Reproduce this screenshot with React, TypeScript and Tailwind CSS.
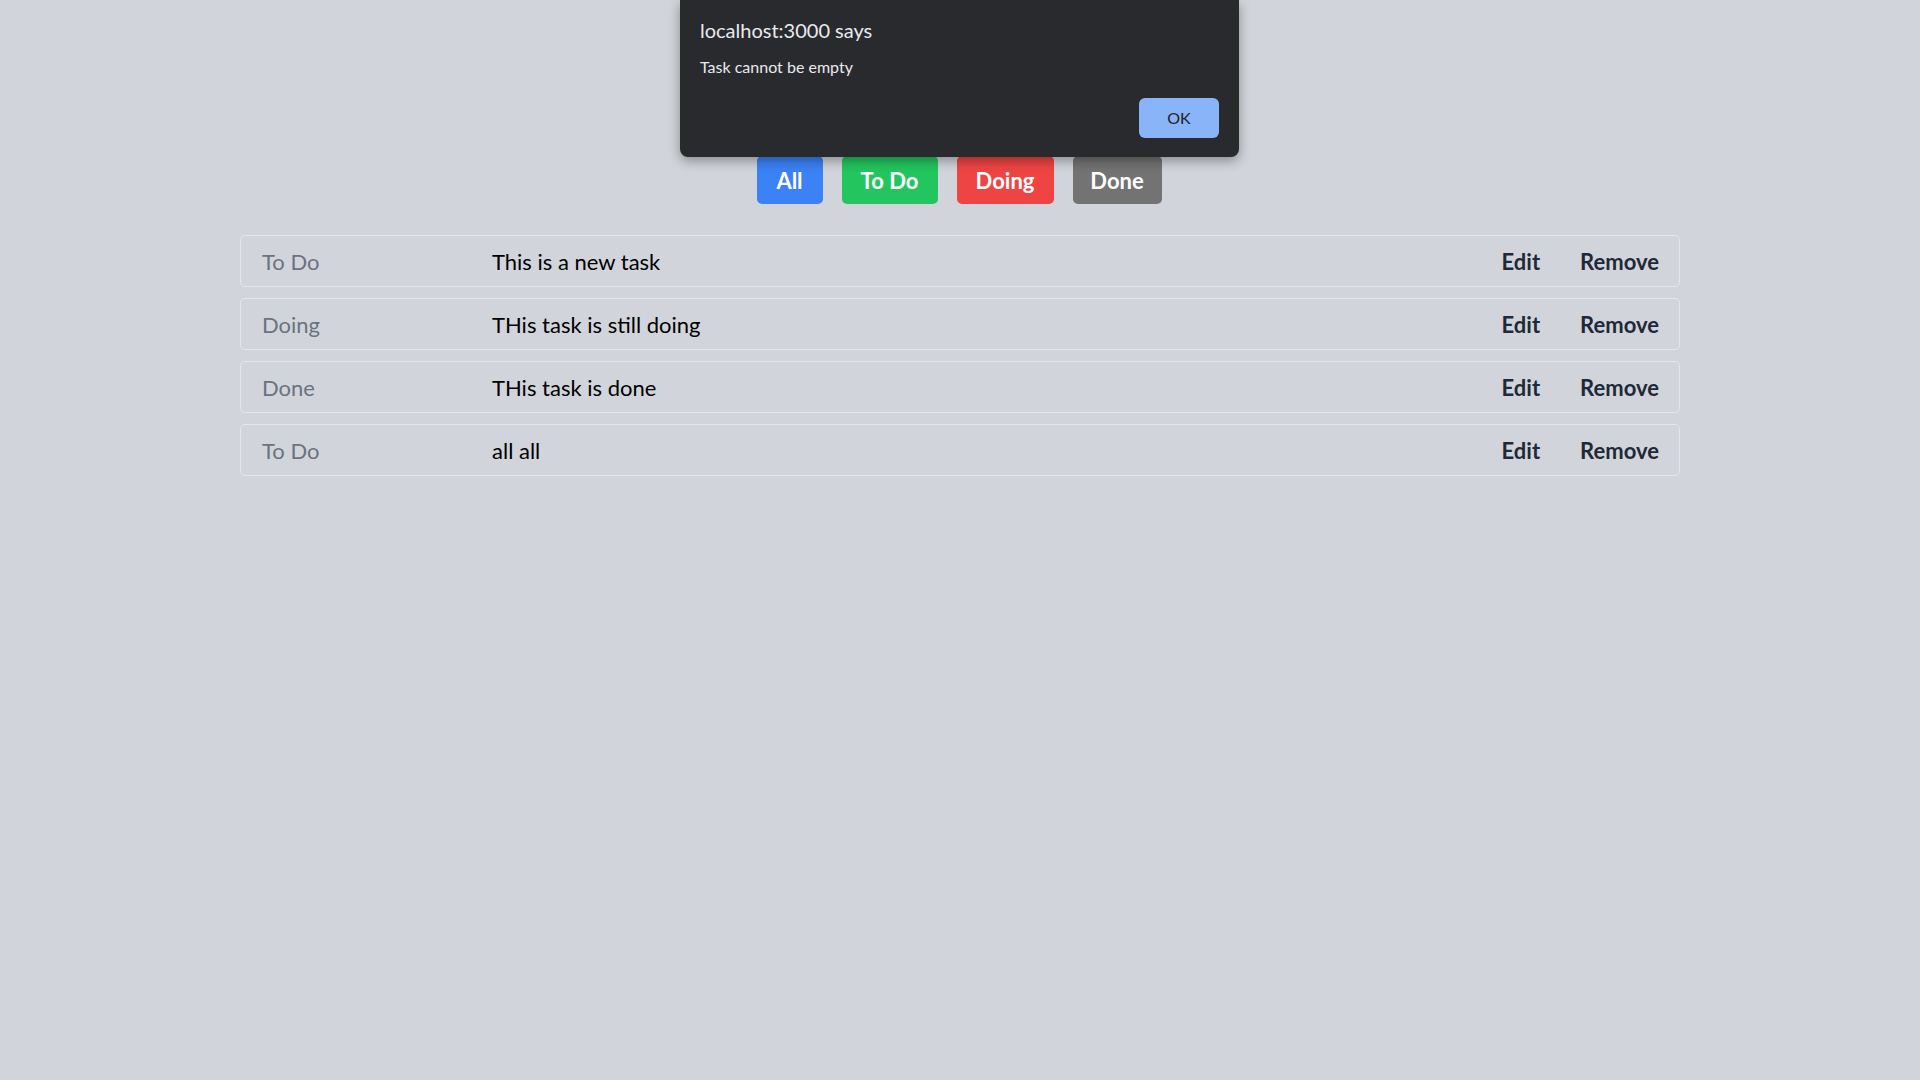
const tasks = [
  { status: 'To Do', text: 'This is a new task' },
  { status: 'Doing', text: 'THis task is still doing' },
  { status: 'Done', text: 'THis task is done' },
  { status: 'To Do', text: 'all all' },
];

const filters = [
  { label: 'All', className: 'bg-[#3b82f6] w-[66px]' },
  { label: 'To Do', className: 'bg-[#22c55e] w-[96px]' },
  { label: 'Doing', className: 'bg-[#ef4444] w-[97px]' },
  { label: 'Done', className: 'bg-[#737373] w-[89px]' },
];

export default function App() {
  return (
    <div className="relative min-h-screen bg-[#d1d5db] font-['Lato',sans-serif]">
      <div className="flex flex-col items-center pt-[156px]">
        {/* Filter buttons */}
        <div className="flex gap-[19px] pr-[2px]">
          {filters.map((f) => (
            <button
              key={f.label}
              className={`h-[48px] rounded-[5px] text-[22px] font-bold text-white ${f.className}`}
            >
              {f.label}
            </button>
          ))}
        </div>

        {/* Task list */}
        <div className="mt-[31px] flex w-[1440px] flex-col gap-[11px]">
          {tasks.map((t, i) => (
            <div
              key={i}
              className="flex h-[52px] items-center rounded-[5px] border border-[#e5e7eb] pl-[21px] pr-[20px]"
            >
              <span className="w-[230px] text-[22px] text-[#6b7280]">{t.status}</span>
              <span className="flex-1 text-[22px] text-black">{t.text}</span>
              <button className="text-[22px] font-bold text-[#1f2937]">Edit</button>
              <button className="ml-[40px] text-[22px] font-bold text-[#1f2937]">Remove</button>
            </div>
          ))}
        </div>
      </div>

      {/* Browser alert dialog */}
      <div className="absolute left-[680px] top-0 w-[559px] rounded-b-[8px] bg-[#292a2d] px-5 pt-[18px] pb-[19px] shadow-[0_4px_12px_rgba(0,0,0,0.35)]">
        <p className="text-[20px] leading-[24px] text-[#e8eaed]">localhost:3000 says</p>
        <p className="mt-[14px] text-[16px] leading-[22px] text-[#e8eaed]">Task cannot be empty</p>
        <div className="mt-[20px] flex justify-end">
          <button className="h-[40px] w-[80px] rounded-[6px] bg-[#8ab4f8] text-[16px] text-[#202124]">
            OK
          </button>
        </div>
      </div>
    </div>
  );
}
